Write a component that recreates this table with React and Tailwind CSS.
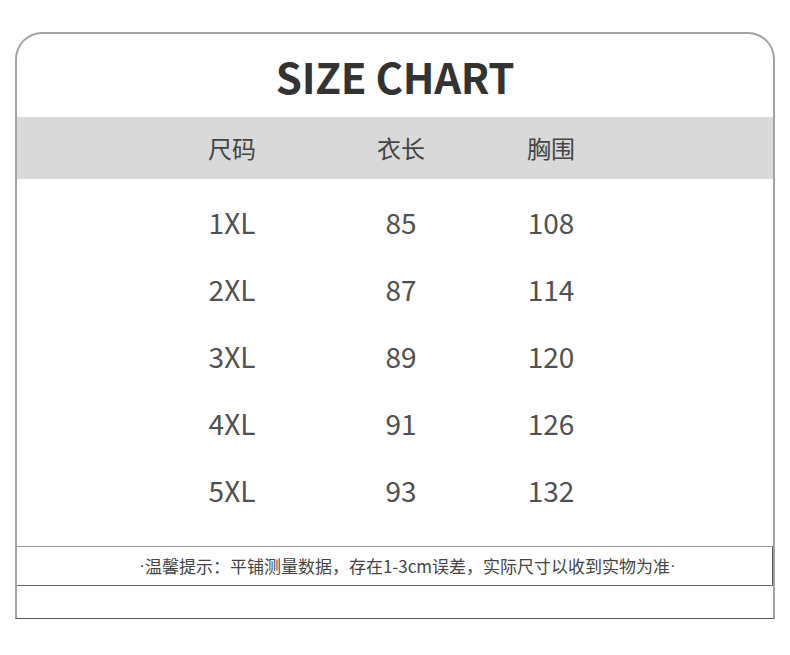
import React from 'react';

const rows = [
  ['1XL', '85', '108'],
  ['2XL', '87', '114'],
  ['3XL', '89', '120'],
  ['4XL', '91', '126'],
  ['5XL', '93', '132'],
];

function Row({ cells, className }) {
  return (
    <div className={'flex items-center ' + className}>
      <span className="w-[100px] ml-[165px] text-center">{cells[0]}</span>
      <span className="w-[100px] ml-[69px] text-center">{cells[1]}</span>
      <span className="w-[100px] ml-[50px] text-center">{cells[2]}</span>
    </div>
  );
}

export default function App() {
  return (
    <div
      className="w-[790px] h-[655px] bg-white pt-[32px] pl-[15px]"
      style={{ fontFamily: '"Noto Sans CJK SC", "Noto Sans", sans-serif' }}
    >
      <div className="w-[760px] border-2 border-[#a3a3a3] border-b-[#555] border-b-[1.5px] rounded-t-[27px]">
        {/* Title */}
        <div className="h-[83px] flex items-center justify-center">
          <h1 className="text-[42px] font-bold text-[#333] leading-none tracking-[-0.3px]">SIZE CHART</h1>
        </div>

        {/* Header band */}
        <Row cells={['尺码', '衣长', '胸围']} className="h-[62px] bg-[#d9d9d9] text-[24px] text-[#444]" />

        {/* Data rows */}
        <div className="pt-[9px] pb-[23px]">
          {rows.map(r => (
            <Row key={r[0]} cells={r} className="h-[67px] text-[28px] text-[#505050]" />
          ))}
        </div>

        {/* Note */}
        <div className="h-[40px] border-t border-t-[#9a9a9a] border-b-[1.5px] border-b-[#666] border-r border-r-[#555] flex items-center justify-center pl-[26px] text-[17px] text-[#444]">
          <span className="font-['Liberation_Sans']">·</span>温馨提示：平铺测量数据，存在1-3cm误差，实际尺寸以收到实物为准<span className="font-['Liberation_Sans']">·</span>
        </div>

        <div className="h-[32px]" />
      </div>
    </div>
  );
}
